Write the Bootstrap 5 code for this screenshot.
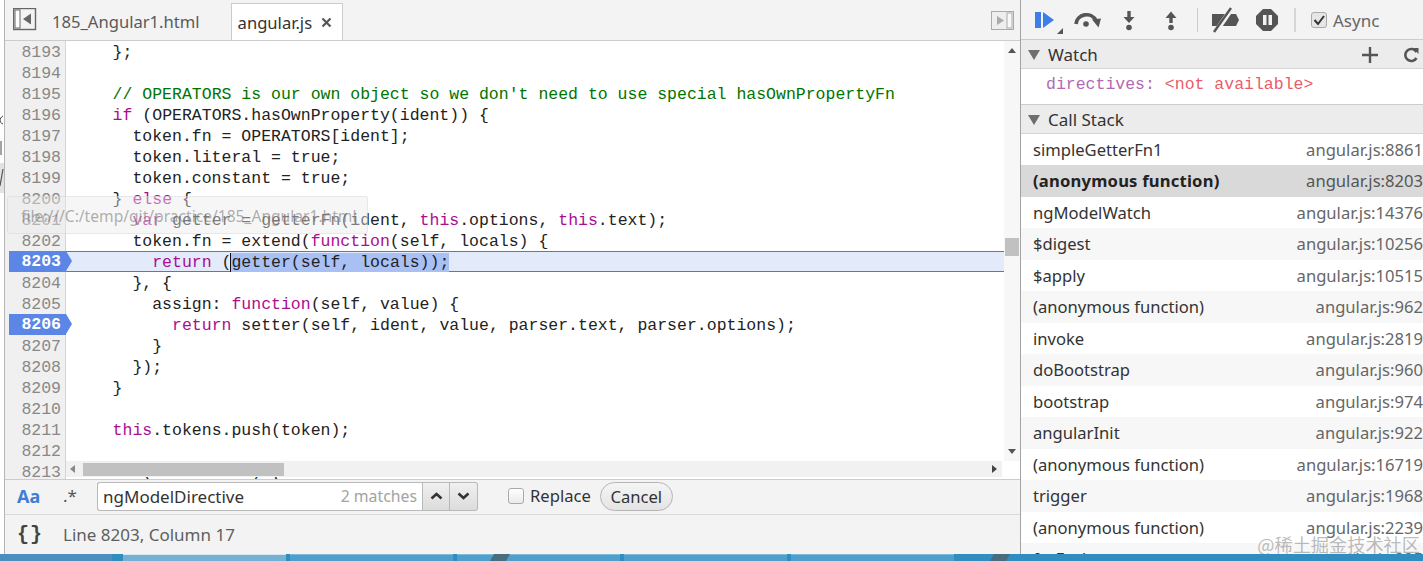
<!DOCTYPE html>
<html lang="en">
<head>
<meta charset="utf-8">
<title>DevTools Sources</title>
<link href="https://cdn.jsdelivr.net/npm/bootstrap@5.3.0/dist/css/bootstrap.min.css" rel="stylesheet">
<style>
html,body{height:561px;overflow:hidden;margin:0;background:#fff}
body{font-family:"Noto Sans","Open Sans",sans-serif;font-size:16.6px;color:#333}
.screen{height:561px;position:relative}
.deskmain{height:554px;min-height:0;flex:none}
.leftstrip{width:4px;background:#fff;flex:none;overflow:hidden}
.editorpane{width:1017px;flex:none;border-left:1px solid #b5b5b5;border-right:1px solid #a3a3a3;min-width:0}
.sidepane{flex:1;min-width:0;overflow:hidden;position:relative}
.tabbar{height:41px;background:#f3f3f3;border-bottom:1px solid #ccc;flex:none;padding-left:8px}
.tabitem{height:37px;margin-top:3px;padding:0 7px;color:#5a5a5a;line-height:37px;white-space:nowrap}
.tabitem.actv{background:#fff;border:1px solid #ccc;border-bottom:0;color:#333;margin-left:24px;height:37px;width:112px;padding:0 10px 0 6px}
.editorbody{flex:1;min-height:0;position:relative;overflow:hidden}
.gutter{width:61px;flex:none;background:#f0f0f0;border-right:1px solid #d4d4d4}
.ln,.cl{height:21px;line-height:23px;font-family:"Liberation Mono",monospace;font-size:16.5px;white-space:pre}
.ln{color:#888;text-align:right;padding-right:4px;padding-left:4px}
.ln.bp{position:relative;z-index:2;color:#fff;font-weight:700;background:#5b86e5;margin-left:4px;padding-right:5px;margin-right:-1px;width:57px;line-height:22px}
.ln.bp::after{content:"";position:absolute;left:57px;top:0;width:0;height:0;border-left:6px solid #5b86e5;border-top:10.5px solid transparent;border-bottom:10.5px solid transparent}
.codecol{flex:1;min-width:0;overflow:hidden;padding-left:7px}
.cl{color:#222}
.cl.curr{background:#e3ebfb;box-shadow:inset 0 1px 0 #4f79c9,inset 0 -1px 0 #4f79c9;margin-left:-7px;padding-left:7px}
.kw{color:#aa0d91}
.cm{color:#007400}
.sel{background:#a9c0f5;border-left:1px solid #111;margin-left:-1px}
.vscroll{width:16px;flex:none;position:relative}
.vtrack{height:420px;background:#f7f7f7;position:relative}
.hscroll{position:absolute;left:61px;right:18px;bottom:2px;height:16px;background:#f1f1f1}
.hthumb{position:absolute;left:17px;top:2px;width:201px;height:13px;background:#c1c1c1}
.sbthumb{position:absolute;left:1px;top:197px;width:14px;height:18px;background:#c1c1c1}
.arr{position:absolute;width:0;height:0;border-style:solid;border-color:transparent}
.findbar{height:36px;background:#f3f3f3;border-top:1px solid #ccc;border-bottom:1px solid #d8d8d8;flex:none;position:relative;padding:0 0 2px 12px;font-size:17px}
.aa{font-weight:700;color:#3d7fd6;font-size:18px;width:46px}
.dotstar{width:34px;color:#555;font-size:17px}
.findbox{width:325px;height:29px;background:#fff;border:1px solid #b9b9b9;border-right:0;border-radius:3px 0 0 3px;padding:0 5px;line-height:27px;color:#333}
.matches{color:#a3a3a3;font-size:15.8px}
.findbtn{width:28px;height:29px;background:linear-gradient(#f0f0f0,#dcdcdc);border:1px solid #b9b9b9}
.findbtn+.findbtn{border-left:0;border-radius:0 3px 3px 0}
.fakecheck{width:16px;height:16px;border:1px solid #aaa;border-radius:3px;background:linear-gradient(#fff,#eaeaea);flex:none}
.replacetxt{margin-left:6px;font-size:16.6px}
.cancelbtn{width:73px;height:29px;border:1px solid #b5b5b5;border-radius:15px;background:linear-gradient(#f5f5f5,#e4e4e4);line-height:27px;text-align:center;color:#333;margin-left:9px;font-size:16.6px}
.statusbar{height:39px;flex:none;background:#f3f3f3;padding:1px 0 0 12px;color:#5f5f5f;font-size:17px}
.braces{font-family:"Liberation Mono",monospace;font-weight:700;color:#444;font-size:20px;width:46px;letter-spacing:1px}
.tiptext{position:absolute;left:7px;top:196px;width:361px;height:38px;border-radius:3px;background:rgba(235,235,235,.45);border:1px solid rgba(200,200,200,.3);color:rgba(110,110,110,.55);font-size:15.6px;line-height:39px;padding-left:13px;white-space:nowrap;overflow:hidden;z-index:3}
.toolbar{height:40px;background:#f3f3f3;border-bottom:1px solid #ccc}
.sechead{height:29px;background:#ececec;border-bottom:1px solid #d5d5d5;padding-left:7px;padding-top:1px;color:#333;font-size:17px}
.tri{width:0;height:0;border-left:6px solid transparent;border-right:6px solid transparent;border-top:10px solid #6e6e6e;margin-right:8px}
.watchrow{height:36px;border-bottom:1px solid #ccc;font-family:"Liberation Mono",monospace;font-size:16.5px;line-height:32px;padding-left:25px;white-space:pre}
.wname{color:#b368b5}
.wval{color:#ea5c68}
.stacklist{margin-top:-.5px}
.stackrow{height:31.5px;line-height:31.5px;padding:0 0 0 12px;color:#333;white-space:nowrap}
.stackrow:nth-child(even){background:#f7f7f7}
.stackrow.cur{background:#d9d9d9;color:#222}
.stackrow.cur .fn{font-weight:700;letter-spacing:.2px}
.srcloc{color:#666}
.stackrow.cur .srcloc{color:#555}
.wmark{position:absolute;right:3px;bottom:-1px;font-family:"Noto Sans CJK SC","Noto Sans",sans-serif;font-size:18.2px;line-height:22px;color:rgba(130,130,130,.55);white-space:nowrap}
.taskbar{height:7px;flex:none;background:#2f8dc0;position:relative;overflow:hidden}
.tseg{width:163px;margin-right:4px;background:#4f9fcd;border-top:1px solid #7dbcdc;flex:none}
.tseg.lite{background:#74b1d3;border-top-color:#d5e8f2;margin-left:11px}
.tfirst{width:112px;background:#4a8fbd;flex:none}
.tslant{position:absolute;top:0;height:7px;width:16px;background:#4a6d7d;transform:skewX(-30deg)}
</style>
</head>
<body>
<div class="screen d-flex flex-column">
  <div class="deskmain d-flex">
    <div class="leftstrip"><svg width="4" height="554" viewBox="0 0 4 554"><rect y="163" width="4" height="30" fill="#e2e2e2"/><path d="M3 116c-2 1-3 3-3 4s1 4 3 4" fill="none" stroke="#444" stroke-width="1"/><path d="M1 141v14" stroke="#666" stroke-width="1.200"/><path d="M0 186l3-17" stroke="#555" stroke-width="1.200"/></svg></div>
    <div class="editorpane d-flex flex-column">
      <div class="tabbar d-flex align-items-start">
        <svg width="24" height="23" viewBox="0 0 24 23" class="mt-2 flex-none"><rect x=".5" y=".5" width="22" height="21" fill="#f3f3f3" stroke="#666" stroke-width="1.4"/><rect x="2" y="2" width="5" height="18" fill="#fff" stroke="#666"/><path d="M18 5.5v11l-8-5.5z" fill="#666"/></svg>
        <div class="tabitem ms-2">185_Angular1.html</div>
        <div class="tabitem actv d-flex align-items-center justify-content-between"><span>angular.js</span><svg width="11" height="11" viewBox="0 0 11 11"><path d="M1.5 1.5l8 8M9.5 1.5l-8 8" stroke="#555" stroke-width="2.2"/></svg></div>
        <svg width="24" height="20" viewBox="0 0 24 20" class="ms-auto" style="margin-top:11px;margin-right:5px"><rect x=".5" y=".5" width="22" height="18" fill="#eee" stroke="#aaa"/><rect x="16" y="2" width="5" height="15" fill="#f8f8f8" stroke="#aaa"/><path d="M6 5v9l7-4.500z" fill="#aaa"/></svg>
      </div>
      <div class="editorbody d-flex">
        <div class="gutter">
<div class="ln">8193</div><div class="ln">8194</div><div class="ln">8195</div><div class="ln">8196</div><div class="ln">8197</div><div class="ln">8198</div><div class="ln">8199</div><div class="ln">8200</div><div class="ln">8201</div><div class="ln">8202</div><div class="ln bp">8203</div><div class="ln">8204</div><div class="ln">8205</div><div class="ln bp">8206</div><div class="ln">8207</div><div class="ln">8208</div><div class="ln">8209</div><div class="ln">8210</div><div class="ln">8211</div><div class="ln">8212</div><div class="ln">8213</div>
        </div>
        <div class="codecol">
<div class="cl">    };</div>
<div class="cl"> </div>
<div class="cl">    <span class="cm">// OPERATORS is our own object so we don't need to use special hasOwnPropertyFn</span></div>
<div class="cl">    <span class="kw">if</span> (OPERATORS.hasOwnProperty(ident)) {</div>
<div class="cl">      token.fn = OPERATORS[ident];</div>
<div class="cl">      token.literal = true;</div>
<div class="cl">      token.constant = true;</div>
<div class="cl">    } <span class="kw">else</span> {</div>
<div class="cl">      <span class="kw">var</span> getter = getterFn(ident, <span class="kw">this</span>.options, <span class="kw">this</span>.text);</div>
<div class="cl">      token.fn = extend(<span class="kw">function</span>(self, locals) {</div>
<div class="cl curr">        <span class="kw">return</span> (<span class="sel">getter(self, locals));</span></div>
<div class="cl">      }, {</div>
<div class="cl">        assign: <span class="kw">function</span>(self, value) {</div>
<div class="cl">          <span class="kw">return</span> setter(self, ident, value, parser.text, parser.options);</div>
<div class="cl">        }</div>
<div class="cl">      });</div>
<div class="cl">    }</div>
<div class="cl"> </div>
<div class="cl">    <span class="kw">this</span>.tokens.push(token);</div>
<div class="cl"> </div>
<div class="cl">    <span class="kw">if</span> (methodName) {</div>
        </div>
        <div class="vscroll">
          <div class="vtrack">
            <span class="arr" style="left:4px;top:7px;border-width:0 4px 5px;border-bottom-color:#555"></span>
            <div class="sbthumb"></div>
            <span class="arr" style="left:4px;top:408px;border-width:5px 4px 0;border-top-color:#555"></span>
          </div>
        </div>
        <div class="hscroll">
          <span class="arr" style="left:4px;top:4px;border-width:4px 5px 4px 0;border-right-color:#888"></span>
          <div class="hthumb"></div>
          <span class="arr" style="right:5px;top:4px;border-width:4px 0 4px 5px;border-left-color:#444"></span>
        </div>
      </div>
      <div class="findbar d-flex align-items-center">
        <div class="aa">Aa</div>
        <div class="dotstar">.*</div>
        <div class="findbox d-flex justify-content-between"><span>ngModelDirective</span><span class="matches">2 matches</span></div>
        <div class="findbtn d-flex align-items-center justify-content-center"><svg width="13" height="8" viewBox="0 0 13 8"><path d="M1.500 6.500l5-4.500 5 4.500" fill="none" stroke="#333" stroke-width="2.600"/></svg></div>
        <div class="findbtn d-flex align-items-center justify-content-center"><svg width="13" height="8" viewBox="0 0 13 8"><path d="M1.500 1.500l5 4.500 5-4.500" fill="none" stroke="#333" stroke-width="2.600"/></svg></div>
        <div class="fakecheck" style="margin-left:30px"></div>
        <span class="replacetxt">Replace</span>
        <div class="cancelbtn">Cancel</div>
      </div>
      <div class="statusbar d-flex align-items-center">
        <div class="braces">{}</div>
        <span>Line 8203, Column 17</span>
      </div>
    </div>
    <div class="sidepane">
      <div class="toolbar d-flex align-items-center">
        <svg width="402" height="40" viewBox="1022 0 402 40">
          <rect x="1036" y="12" width="6" height="16" fill="#3d7fe6"/><path d="M1044 12l11 8-11 8z" fill="#3d7fe6"/>
          <path d="M1058 34h6v-6z" fill="#555"/>
          <path d="M1077 24a10.500 10 0 0 1 20-3.500" fill="none" stroke="#555" stroke-width="3.600"/><path d="M1093 19.500l9-1-2.500 9z" fill="#555"/><circle cx="1087" cy="24" r="2.800" fill="#555"/>
          <path d="M1130 11v8" stroke="#555" stroke-width="3.400"/><path d="M1124.500 17h11l-5.500 6z" fill="#555"/><circle cx="1130" cy="27.500" r="2.800" fill="#555"/>
          <path d="M1172 14v9" stroke="#555" stroke-width="3.400"/><path d="M1166.500 18h11l-5.500-6.500z" fill="#555"/><circle cx="1172" cy="27.500" r="2.800" fill="#555"/>
          <path d="M1198.500 8v24" stroke="#ccc"/>
          <path d="M1213 14h24l3 6-3 6h-24z" fill="#555"/><path d="M1216 33l17-25" stroke="#f3f3f3" stroke-width="5"/><path d="M1215 32l17-24" stroke="#555" stroke-width="2.400"/>
          <path d="M1264 9h8l7 7v8l-7 7h-8l-7-7v-8z" fill="#555"/><rect x="1264" y="15" width="3.500" height="10" fill="#f3f3f3"/><rect x="1269.500" y="15" width="3.500" height="10" fill="#f3f3f3"/>
          <path d="M1296 8v24" stroke="#ccc" stroke-width="1.500"/>
          <rect x="1312.500" y="12.500" width="15" height="15" rx="2.500" fill="#e6e6e6" stroke="#aaa"/><path d="M1315.500 20l3.500 4 6-8" fill="none" stroke="#333" stroke-width="2"/>
          <text x="1334" y="27" font-family="Noto Sans,sans-serif" font-size="17" fill="#666">Async</text>
        </svg>
      </div>
      <div class="sechead d-flex align-items-center">
        <span class="tri"></span><span>Watch</span>
        <svg width="16" height="16" viewBox="0 0 16 16" class="ms-auto" style="margin-right:26px"><path d="M8 0v16M0 8h16" stroke="#555" stroke-width="2.400"/></svg>
        <svg width="15" height="16" viewBox="0 0 15 16" style="margin-right:4px"><path d="M12.500 11a6 6 0 1 1 0-6" fill="none" stroke="#555" stroke-width="2.600"/><path d="M9 1l5.500 0v6z" fill="#555"/></svg>
      </div>
      <div class="watchrow"><span class="wname">directives:</span> <span class="wval">&lt;not available&gt;</span></div>
      <div class="sechead d-flex align-items-center"><span class="tri"></span><span>Call Stack</span></div>
      <div class="stacklist">
        <div class="stackrow d-flex justify-content-between"><span class="fn">simpleGetterFn1</span><span class="srcloc">angular.js:8861</span></div>
        <div class="stackrow cur d-flex justify-content-between"><span class="fn">(anonymous function)</span><span class="srcloc">angular.js:8203</span></div>
        <div class="stackrow d-flex justify-content-between"><span class="fn">ngModelWatch</span><span class="srcloc">angular.js:14376</span></div>
        <div class="stackrow d-flex justify-content-between"><span class="fn">$digest</span><span class="srcloc">angular.js:10256</span></div>
        <div class="stackrow d-flex justify-content-between"><span class="fn">$apply</span><span class="srcloc">angular.js:10515</span></div>
        <div class="stackrow d-flex justify-content-between"><span class="fn">(anonymous function)</span><span class="srcloc">angular.js:962</span></div>
        <div class="stackrow d-flex justify-content-between"><span class="fn">invoke</span><span class="srcloc">angular.js:2819</span></div>
        <div class="stackrow d-flex justify-content-between"><span class="fn">doBootstrap</span><span class="srcloc">angular.js:960</span></div>
        <div class="stackrow d-flex justify-content-between"><span class="fn">bootstrap</span><span class="srcloc">angular.js:974</span></div>
        <div class="stackrow d-flex justify-content-between"><span class="fn">angularInit</span><span class="srcloc">angular.js:922</span></div>
        <div class="stackrow d-flex justify-content-between"><span class="fn">(anonymous function)</span><span class="srcloc">angular.js:16719</span></div>
        <div class="stackrow d-flex justify-content-between"><span class="fn">trigger</span><span class="srcloc">angular.js:1968</span></div>
        <div class="stackrow d-flex justify-content-between"><span class="fn">(anonymous function)</span><span class="srcloc">angular.js:2239</span></div>
        <div class="stackrow d-flex justify-content-between"><span class="fn">forEach</span><span class="srcloc">angular.js:325</span></div>
      </div>
      <div class="wmark">@稀土掘金技术社区</div>
    </div>
  </div>
  <div class="tiptext">file:///C:/temp/git/practice/185_Angular1.html</div>
  <div class="taskbar d-flex">
    <div class="tfirst"></div>
    <div class="tseg lite"></div>
    <div class="tseg"></div>
    <div class="tseg"></div>
    <div class="tseg"></div>
    <div class="tseg"></div>
    <span class="tslant" style="left:492px"></span>
    <span class="tslant" style="left:992px"></span>
  </div>
</div>
<script src="https://cdn.jsdelivr.net/npm/bootstrap@5.3.0/dist/js/bootstrap.bundle.min.js"></script>
</body>
</html>
